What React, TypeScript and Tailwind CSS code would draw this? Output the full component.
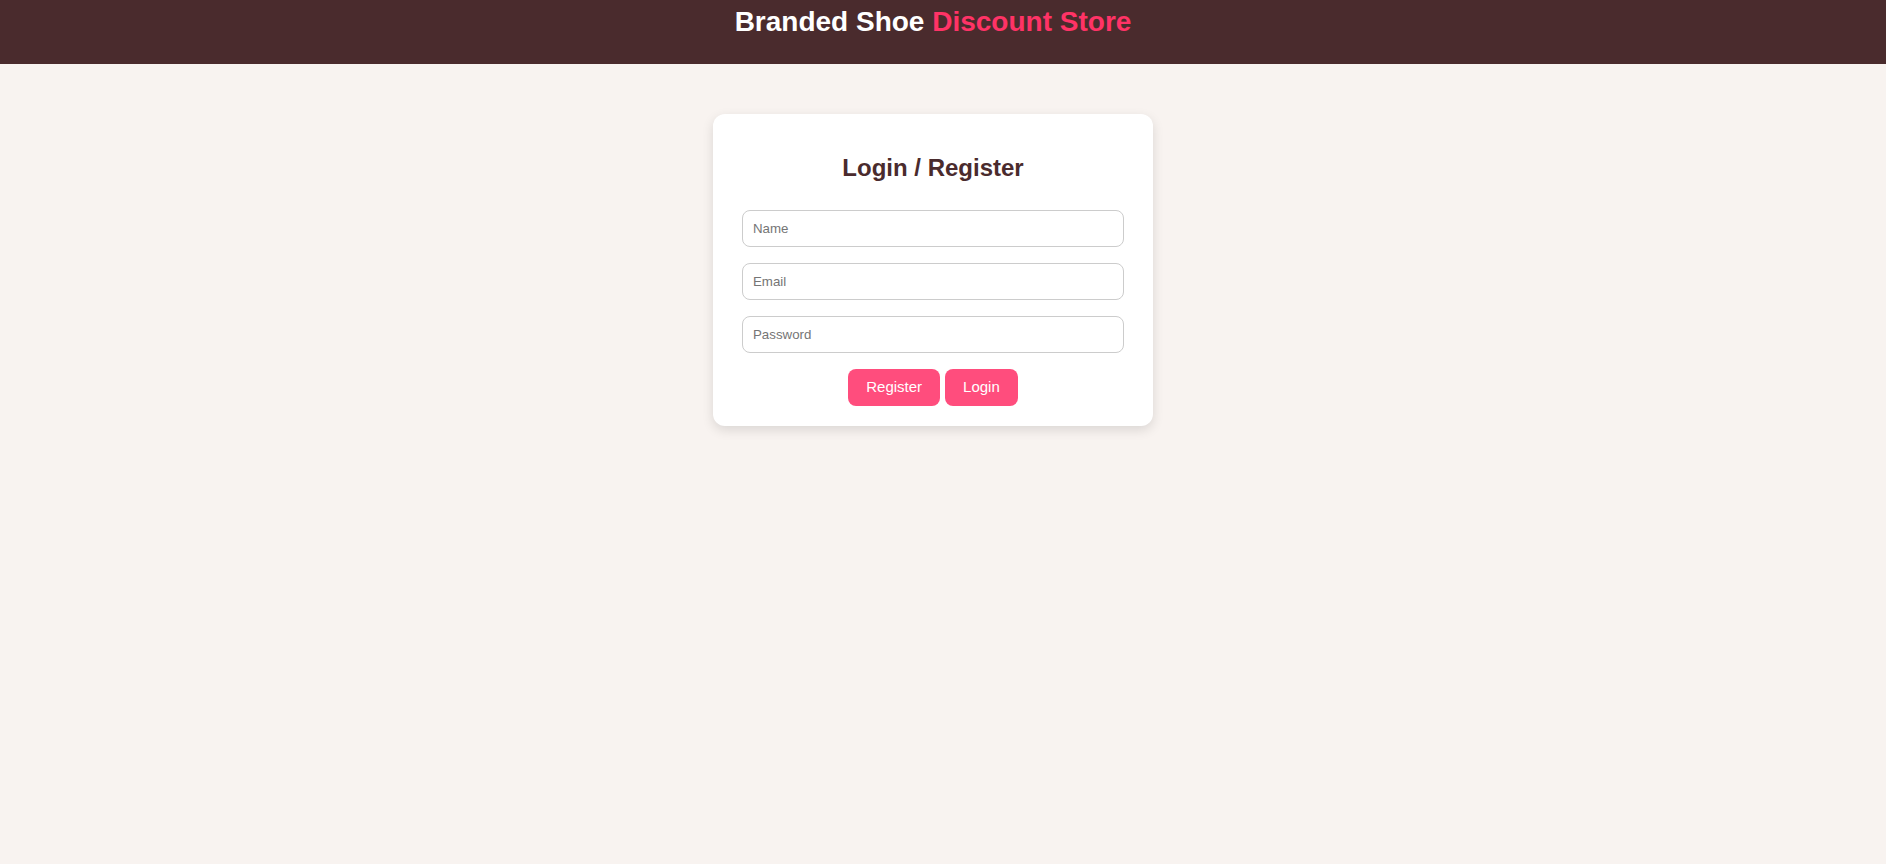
export default function App() {
  return (
    <div
      className="min-h-screen bg-[#f8f3f0]"
      style={{ fontFamily: '"Liberation Sans", Arial, sans-serif' }}
    >
      {/* header */}
      <header className="h-16 bg-[#4a2b2d] pr-5 pt-[6px] text-center">
        <h1 className="text-[28px] font-bold leading-[1.15] text-white">
          Branded Shoe <span className="text-[#ff3366]">Discount Store</span>
        </h1>
      </header>

      {/* login card */}
      <main className="flex justify-center pr-5 pt-[50px]">
        <div className="w-[440px] rounded-xl bg-white px-[29px] pt-10 pb-5 text-center shadow-[0_4px_12px_rgba(0,0,0,0.12)]">
          <h2 className="text-2xl font-bold leading-[1.15] text-[#4a2b2d]">
            Login / Register
          </h2>
          <div className="mt-7 flex flex-col gap-4">
            <input
              className="h-[37px] w-full rounded-lg border border-[#cccccc] px-[10px] text-[13.3px] text-gray-800 outline-none placeholder:text-[#757575]"
              placeholder="Name"
            />
            <input
              className="h-[37px] w-full rounded-lg border border-[#cccccc] px-[10px] text-[13.3px] text-gray-800 outline-none placeholder:text-[#757575]"
              placeholder="Email"
            />
            <input
              type="password"
              className="h-[37px] w-full rounded-lg border border-[#cccccc] px-[10px] text-[13.3px] text-gray-800 outline-none placeholder:text-[#757575]"
              placeholder="Password"
            />
          </div>
          <div className="mt-4 flex justify-center gap-[5px]">
            <button className="h-[37px] rounded-lg bg-[#ff4d7d] px-[18px] text-[15px] text-white">
              Register
            </button>
            <button className="h-[37px] rounded-lg bg-[#ff4d7d] px-[18px] text-[15px] text-white">
              Login
            </button>
          </div>
        </div>
      </main>
    </div>
  );
}
